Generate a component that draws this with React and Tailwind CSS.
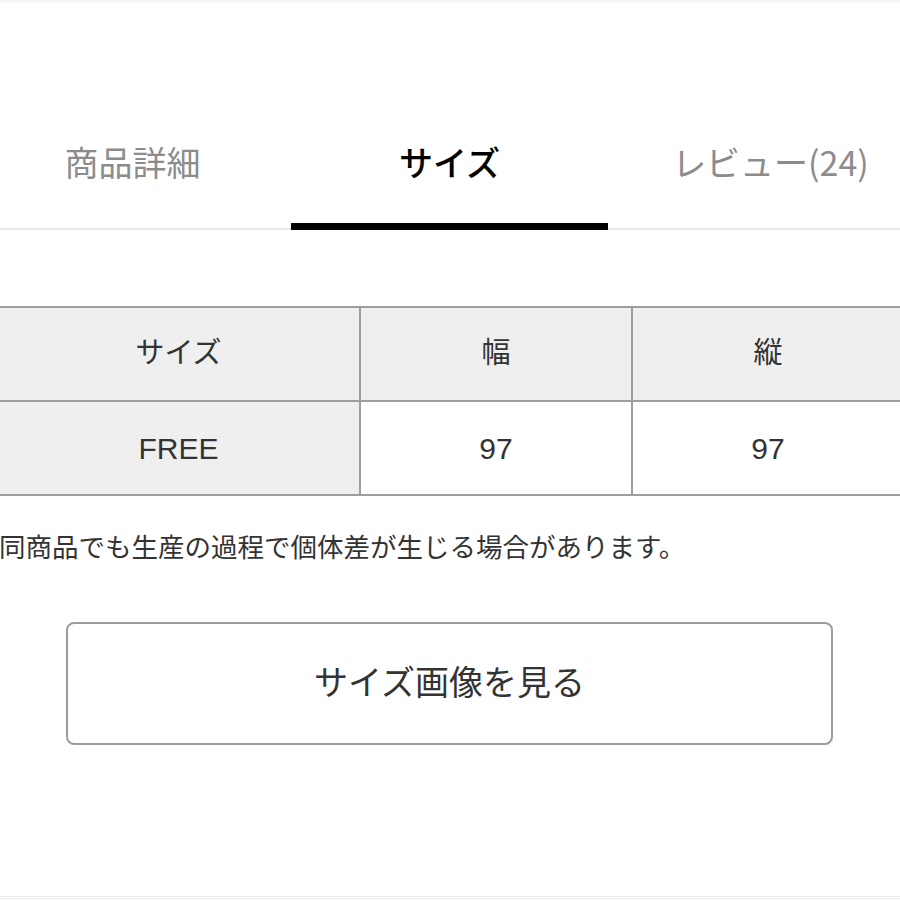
const tabs = [
  { label: '商品詳細', active: false, shift: '' },
  { label: 'サイズ', active: true, shift: '' },
  { label: 'レビュー(24)', active: false, shift: 'ml-[8px]' },
];

const headers = ['サイズ', '幅', '縦'];
const rows = [['FREE', '97', '97']];

export default function App() {
  return (
    <div
      className="w-[900px] h-[900px] overflow-hidden bg-white text-[#333]"
      style={{ fontFamily: '"Liberation Sans", "Noto Sans CJK JP", sans-serif' }}
    >
      <div className="h-[3px] bg-[#f6f6f6]" />

      {/* tabs */}
      <div className="pt-[142px] border-b-2 border-[#e8e8e8]">
        <div className="flex ml-[-26px]">
          {tabs.map((t) => (
            <div key={t.label} className="w-[317px] shrink-0 flex flex-col items-center">
              <div
                className={
                  'text-[34px] leading-[34px] ' +
                  (t.active ? 'text-black font-medium ' : 'text-[#8c8c8c] font-normal ') +
                  t.shift
                }
                style={{ fontFamily: '"Noto Sans CJK JP", sans-serif' }}
              >
                {t.label}
              </div>
              <div className="h-[44px]" />
              <div className={'h-[7px] w-full mb-[-2px] ' + (t.active ? 'bg-black' : 'bg-transparent')} />
            </div>
          ))}
        </div>
      </div>

      {/* size table */}
      <div className="mt-[76px] ml-[-4px] w-[909px] grid grid-cols-[363px_272px_272px] border-t-2 border-l-2 border-[#9e9e9e]">
        {headers.map((h) => (
          <div
            key={h}
            className="h-[94px] flex items-center justify-center border-r-2 border-b-2 border-[#9e9e9e] bg-[#efefef] text-[29px]"
          >
            {h}
          </div>
        ))}
        {rows.map((r) =>
          r.map((c, i) => (
            <div
              key={i}
              className={
                'h-[94px] flex items-center justify-center border-r-2 border-b-2 border-[#9e9e9e] text-[30px] ' +
                (i === 0 ? 'bg-[#efefef]' : 'bg-white')
              }
            >
              {c}
            </div>
          ))
        )}
      </div>

      <p className="mt-[32px] ml-[-1px] text-[26.5px] leading-[40px] whitespace-nowrap text-[#333]">
        同商品でも生産の過程で個体差が生じる場合があります。
      </p>

      <button className="mt-[54px] ml-[66px] w-[767px] h-[123px] flex items-center justify-center border-2 border-[#9c9c9c] rounded-[8px] bg-white text-[34px] text-[#333]">
        サイズ画像を見る
      </button>

      <div className="mt-[151px] h-[3px] border-y border-[#ededed]" />
    </div>
  );
}
